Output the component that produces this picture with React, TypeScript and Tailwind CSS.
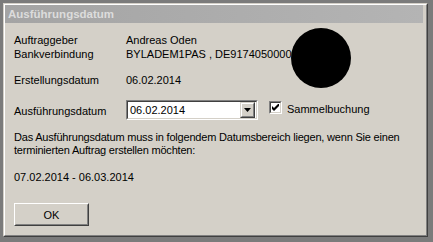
import React from "react";

export default function App() {
  return (
    <div className="w-[433px] h-[242px] bg-[#7b7b7b] pl-[3px] pt-[3px] overflow-hidden font-['Liberation_Sans',Arial,sans-serif] text-black">
      <div className="w-[425px] h-[234px] border border-t-[#d4d0c8] border-l-[#d4d0c8] border-r-[#404040] border-b-[#404040] bg-[#d4d0c8]">
        <div className="relative w-full h-full border border-t-white border-l-white border-r-[#808080] border-b-[#808080] pr-[3px] flex flex-col">
          <div className="h-[18px] bg-gradient-to-r from-[#a4a4a4] to-[#b4b4b4] flex items-center pl-[3px]">
            <span className="text-[11.5px] font-bold text-[#dcdcdc] leading-[14px]">Ausführungsdatum</span>
          </div>
          <div className="flex flex-col pl-[9px] text-[11px] leading-[14px]">
            <div className="flex mt-[10px] h-[14px]">
              <span className="w-[112px]">Auftraggeber</span>
              <span>Andreas Oden</span>
            </div>
            <div className="flex h-[14px]">
              <span className="w-[112px]">Bankverbindung</span>
              <span className="whitespace-nowrap">BYLADEM1PAS , DE9174050000012345</span>
            </div>
            <div className="flex mt-[12px] h-[14px]">
              <span className="w-[112px]">Erstellungsdatum</span>
              <span>06.02.2014</span>
            </div>
            <div className="flex items-start mt-[13px] h-[20px]">
              <span className="w-[112px] mt-[4px]">Ausführungsdatum</span>
              <div className="w-[132px] h-[20px] border border-t-[#808080] border-l-[#808080] border-r-white border-b-white">
                <div className="w-full h-full border border-t-[#404040] border-l-[#404040] border-r-[#d4d0c8] border-b-[#d4d0c8] bg-white flex items-center justify-between pr-[1px]">
                  <span className="pl-[2px]">06.02.2014</span>
                  <div className="w-[15px] h-[16px] bg-[#d4d0c8] border border-t-[#d4d0c8] border-l-[#d4d0c8] border-r-[#404040] border-b-[#404040]">
                    <div className="w-full h-full border border-t-white border-l-white border-r-[#808080] border-b-[#808080] flex items-center justify-center">
                      <svg width="7" height="4" viewBox="0 0 7 4">
                        <path d="M0 0H7L3.5 4Z" fill="#000" />
                      </svg>
                    </div>
                  </div>
                </div>
              </div>
              <div className="ml-[11px] mt-[1px] w-[13px] h-[13px] border border-t-[#808080] border-l-[#808080] border-r-white border-b-white">
                <div className="w-full h-full border border-t-[#404040] border-l-[#404040] border-r-[#d4d0c8] border-b-[#d4d0c8] bg-white flex items-center justify-center">
                  <svg width="7" height="7" viewBox="0 0 7 7">
                    <path d="M0 2L2 4L7 -1L7 2L2 7L0 5Z" fill="#000" />
                  </svg>
                </div>
              </div>
              <span className="ml-[5px] mt-[2px]">Sammelbuchung</span>
            </div>
            <div className="mt-[11px] leading-[13px] whitespace-nowrap tracking-[-0.2px]">
              Das Ausführungsdatum muss in folgendem Datumsbereich liegen, wenn Sie einen
              <br />
              terminierten Auftrag erstellen möchten:
            </div>
            <div className="mt-[13px] h-[14px]">07.02.2014 - 06.03.2014</div>
            <div className="mt-[19px] w-[75px] h-[23px] border border-t-white border-l-white border-r-[#404040] border-b-[#404040]">
              <div className="w-full h-full border border-t-[#d4d0c8] border-l-[#d4d0c8] border-r-[#808080] border-b-[#808080] flex items-center justify-center">
                <span>OK</span>
              </div>
            </div>
          </div>
          <div className="absolute left-[286px] top-[23px] w-[60px] h-[60px] rounded-full bg-black" />
        </div>
      </div>
    </div>
  );
}
